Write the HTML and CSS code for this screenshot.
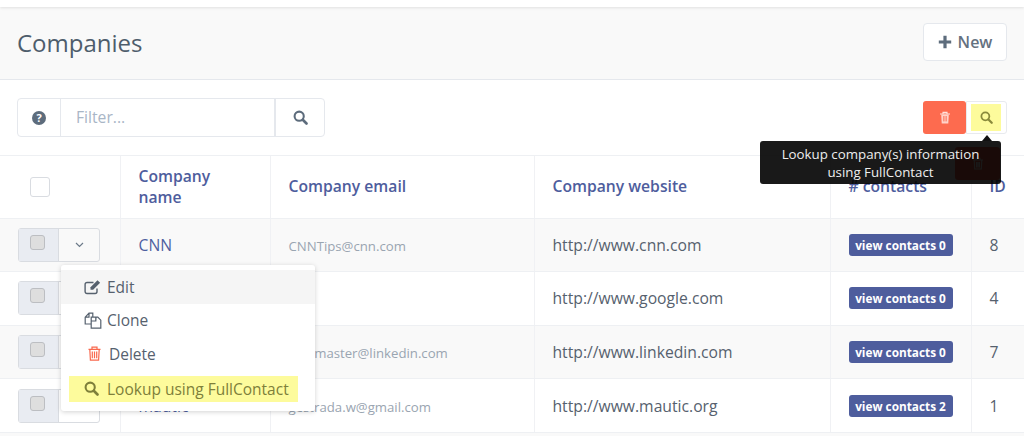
FILE: index.html
```html
<!DOCTYPE html>
<html lang="en">

<head>
    <meta charset="UTF-8">
    <meta name="viewport" content="width=device-width, initial-scale=1.0">
    <title>Companies</title>
    <link rel="stylesheet" href="styles.css">
</head>

<body>
    <div class="topbar"></div>

    <header class="page-head">
        <h1>Companies</h1>
        <button class="btn-new">
            <svg class="ico" width="14" height="14" viewBox="0 0 14 14"><path d="M5.4 0.8h3.2v4.6h4.6v3.2H8.6v4.6H5.4V8.6H0.8V5.4h4.6z" fill="#5d6c7c"/></svg>
            New
        </button>
    </header>

    <div class="toolbar">
        <div class="filter">
            <span class="addon addon-help"><span class="help-dot">?</span></span>
            <input class="filter-input" type="text" placeholder="Filter...">
            <span class="addon addon-search">
                <svg width="15" height="15" viewBox="0 0 16 16"><circle cx="6.6" cy="6.6" r="4.9" fill="none" stroke="#5d6c7c" stroke-width="2.2"/><path d="M10.4 10.4l4 4" stroke="#5d6c7c" stroke-width="2.8" stroke-linecap="round"/></svg>
            </span>
        </div>
        <div class="actions">
            <button class="btn-delete">
                <svg width="12" height="13" viewBox="0 0 12 13"><path d="M1 3h10M4 3V1.4h4V3" fill="none" stroke="#ffe3dc" stroke-width="1.1"/><path d="M2.200 3.400l.5 9h6.600l.5-9z" fill="#ffd2c8"/><path d="M4.600 5v5.400M6 5v5.400M7.400 5v5.400" stroke="#fd6b4f" stroke-width=".7"/></svg>
            </button>
            <span class="btn-lookup">
                <span class="lookup-mark">
                    <svg width="13" height="13" viewBox="0 0 16 16"><circle cx="6.6" cy="6.6" r="4.9" fill="none" stroke="#8a8a3c" stroke-width="2.2"/><path d="M10.4 10.4l4 4" stroke="#8a8a3c" stroke-width="2.8" stroke-linecap="round"/></svg>
                </span>
            </span>
        </div>
    </div>

    <table class="list">
        <colgroup>
            <col class="c-check">
            <col class="c-name">
            <col class="c-email">
            <col class="c-site">
            <col class="c-count">
            <col class="c-id">
        </colgroup>
        <thead>
            <tr>
                <th class="head-check"><span class="check-all"></span></th>
                <th>Company<br>name</th>
                <th>Company email</th>
                <th>Company website</th>
                <th># contacts</th>
                <th>ID</th>
            </tr>
        </thead>
        <tbody>
            <tr>
                <td class="cell-check"><span class="row-tools"><span class="tool-box"><i class="tick"></i></span><span class="tool-caret"><svg width="9" height="6" viewBox="0 0 9 6"><path d="M1 1l3.500 3.500L8 1" fill="none" stroke="#6c7a89" stroke-width="1.200"/></svg></span></span></td>
                <td><a class="name">CNN</a></td>
                <td class="email">CNNTips@cnn.com</td>
                <td class="site">http://www.cnn.com</td>
                <td><span class="badge">view contacts 0</span></td>
                <td class="num">8</td>
            </tr>
            <tr>
                <td class="cell-check"><span class="row-tools"><span class="tool-box"><i class="tick"></i></span><span class="tool-caret"></span></span></td>
                <td><a class="name">google</a></td>
                <td class="email"></td>
                <td class="site">http://www.google.com</td>
                <td><span class="badge">view contacts 0</span></td>
                <td class="num">4</td>
            </tr>
            <tr>
                <td class="cell-check"><span class="row-tools"><span class="tool-box"><i class="tick"></i></span><span class="tool-caret"></span></span></td>
                <td><a class="name">linkedin</a></td>
                <td class="email">webmaster@linkedin.com</td>
                <td class="site">http://www.linkedin.com</td>
                <td><span class="badge">view contacts 0</span></td>
                <td class="num">7</td>
            </tr>
            <tr>
                <td class="cell-check"><span class="row-tools"><span class="tool-box"><i class="tick"></i></span><span class="tool-caret"></span></span></td>
                <td><a class="name">mautic</a></td>
                <td class="email">gestrada.w@gmail.com</td>
                <td class="site">http://www.mautic.org</td>
                <td><span class="badge">view contacts 2</span></td>
                <td class="num">1</td>
            </tr>
        </tbody>
    </table>
    <div class="next-row"></div>

    <!--row menu-->
    <ul class="menu">
        <li class="menu-item is-active">
            <svg class="menu-ico" width="18" height="16" viewBox="0 0 18 16"><path d="M13 9.500V12.600a1.900 1.900 0 0 1-1.900 1.900H3a1.900 1.900 0 0 1-1.900-1.900V5.400A1.900 1.900 0 0 1 3 3.500h6.500" fill="none" stroke="#56616e" stroke-width="1.400"/><path d="M6.500 8.200l7-7 2.600 2.600-7 7H6.500z" fill="#56616e"/></svg>
            Edit
        </li>
        <li class="menu-item">
            <svg class="menu-ico" width="18" height="17" viewBox="0 0 18 17"><path d="M7 12H1.200V5.200L5 1.200h3.800V5M5 1.200V5.200H1.200" fill="none" stroke="#56616e" stroke-width="1.200"/><path d="M7.200 9V5.200h4.600V9zM12 5.200h1.800L16.800 8.200v8H7.200V9h4.600z" fill="none" stroke="#56616e" stroke-width="1.200"/></svg>
            Clone
        </li>
        <li class="menu-item item-delete">
            <svg class="menu-ico" width="13" height="15" viewBox="0 0 13 15"><path d="M.5 3.400h12M4 3.400V1.100h5v2.300M1.800 3.400l.6 10.800h8.200l.6-10.800M4.300 5.500v6.800M6.500 5.500v6.800M8.700 5.500v6.800" fill="none" stroke="#f9684d" stroke-width="1.200"/></svg>
            Delete
        </li>
        <li class="menu-item item-lookup">
            <svg class="menu-ico" width="15" height="15" viewBox="0 0 16 16"><circle cx="6.600" cy="6.600" r="4.900" fill="none" stroke="#7e7f3a" stroke-width="2.200"/><path d="M10.400 10.400l4 4" stroke="#7e7f3a" stroke-width="2.800" stroke-linecap="round"/></svg>
            Lookup using FullContact
        </li>
    </ul>

    <!--floating delete button that sits under the tooltip-->
    <span class="head-delete">
        <svg width="12" height="13" viewBox="0 0 12 13"><path d="M1 3h10M4 3V1.400h4V3M2.200 3l.5 9h6.600l.5-9M4.600 5v5.400M6 5v5.400M7.400 5v5.400" fill="none" stroke="#fff" stroke-width="1.100"/></svg>
    </span>

    <div class="tooltip">Lookup company(s) information<br>using FullContact</div>
</body>

</html>
```

FILE: styles.css
```css
html,
body {
    height: 100%;
}

body {
    margin: 0;
    position: relative;
    overflow: hidden;
    background: #fff;
    color: #56616e;
    font-family: "Open Sans", "Liberation Sans", sans-serif;
    font-size: 16px;
}

.topbar {
    height: 7px;
    background: #fff;
    box-shadow: 0 1px 3px rgba(0, 0, 0, 0.1);
    position: relative;
}

.page-head {
    height: 70px;
    background: #f9f9f9;
    border-bottom: 1px solid #e5e8ed;
    padding: 0 17px 2px;
    display: flex;
    align-items: center;
    justify-content: space-between;
}

.page-head h1 {
    margin: 0;
    font-size: 24px;
    font-weight: 400;
    color: #4e5d6c;
}

.btn-new {
    width: 84px;
    height: 38px;
    padding: 0;
    display: flex;
    align-items: center;
    justify-content: center;
    gap: 6px;
    background: #fff;
    border: 1px solid #e5e8ed;
    border-radius: 4px;
    color: #64717f;
    font: 600 16px "Open Sans", sans-serif;
}

.toolbar {
    height: 76px;
    padding: 0 17px;
    display: flex;
    align-items: center;
    justify-content: space-between;
    box-sizing: border-box;
    border-bottom: 1px solid #eef0f3;
}

.filter {
    display: flex;
    height: 39px;
    width: 308px;
    box-sizing: border-box;
    border: 1px solid #e5e8ed;
    border-radius: 4px;
}

.addon {
    display: flex;
    align-items: center;
    justify-content: center;
}

.addon-help {
    width: 42px;
    border-right: 1px solid #e5e8ed;
}

.help-dot {
    width: 14px;
    height: 14px;
    border-radius: 50%;
    background: #5d6c7c;
    color: #fff;
    font: 700 11px/14px "Open Sans", sans-serif;
    text-align: center;
}

.filter-input {
    width: 215px;
    box-sizing: border-box;
    border: 0;
    border-right: 2px solid #e5e8ed;
    padding: 0 15px 2px;
    outline: 0;
    background: transparent;
    font: 400 15.700px "Open Sans", sans-serif;
}

.filter-input::placeholder {
    color: #a9b6c6;
    opacity: 1;
}

.addon-search {
    flex: 1;
}

.actions {
    display: flex;
    margin-top: -1px;
}

.btn-delete {
    width: 43px;
    height: 33px;
    padding: 0;
    border: 0;
    border-radius: 3px;
    background: #fd6b4f;
    display: flex;
    align-items: center;
    justify-content: center;
}

.btn-lookup {
    width: 41px;
    height: 33px;
    box-sizing: border-box;
    padding-right: 1px;
    display: flex;
    align-items: center;
    justify-content: center;
    border: 1px solid #e8eaee;
    border-radius: 0 3px 3px 0;
}

.lookup-mark {
    width: 30px;
    height: 27px;
    display: flex;
    align-items: center;
    justify-content: center;
    background: #fdfb9c;
}

.list {
    width: 1024px;
    table-layout: fixed;
    border-collapse: collapse;
}

.c-check {
    width: 120px;
}

.c-name {
    width: 150px;
}

.c-email {
    width: 264px;
}

.c-site {
    width: 296px;
}

.c-count {
    width: 141px;
}

.list th {
    height: 62px;
    padding: 0 18px;
    box-sizing: border-box;
    text-align: left;
    font-size: 15.700px;
    line-height: 21px;
    font-weight: 600;
    color: #4e5d9d;
    border-right: 1px solid #f0f1f4;
    border-bottom: 1px solid #eef0f3;
}

.list th:last-child,
.list td:last-child {
    border-right: 0;
}

.check-all {
    display: block;
    width: 18px;
    height: 18px;
    margin-left: 12px;
    border: 1px solid #d9dce1;
    border-radius: 3px;
}

.list td {
    height: 53.600px;
    padding: 0 18px;
    box-sizing: border-box;
    border-right: 1px solid #f0f1f4;
    border-bottom: 1px solid #eef0f3;
}

.list tbody tr:nth-child(odd) {
    background: #f9f9f9;
}

.list .cell-check {
    padding: 0 0 0 18px;
}

.next-row {
    height: 3px;
    background: #f9f9f9;
}

.row-tools {
    display: flex;
    width: 82px;
    height: 34px;
    box-sizing: border-box;
    border: 1px solid #d9dce1;
    border-radius: 3px;
}

.tool-box {
    width: 40px;
    padding-right: 2px;
    box-sizing: border-box;
    display: flex;
    align-items: center;
    justify-content: center;
    background: #e9ecf2;
    border-right: 1px solid #d9dce1;
}

.tick {
    width: 13px;
    height: 13px;
    margin-top: -5px;
    border: 1px solid #bcbec2;
    border-radius: 3px;
    background: #dedede;
}

.tool-caret {
    flex: 1;
    display: flex;
    align-items: center;
    justify-content: center;
}

.name {
    color: #4e5f9f;
    font-size: 15.700px;
}

.email {
    padding-top: 3px !important;
    font-size: 13.200px;
    color: #9aa5b1;
}

.site {
    font-size: 15.700px;
    color: #56616e;
}

.badge {
    display: block;
    width: 104px;
    height: 22px;
    box-sizing: border-box;
    text-align: center;
    background: #4e5d9d;
    border-radius: 3px;
    color: #fff;
    font-size: 11.800px;
    font-weight: 700;
    line-height: 22px;
    white-space: nowrap;
}

.num {
    font-size: 15.700px;
    color: #56616e;
}

.menu {
    position: absolute;
    left: 61px;
    top: 265px;
    width: 254px;
    height: 146px;
    margin: 0;
    padding: 5px 0;
    box-sizing: border-box;
    list-style: none;
    background: #fff;
    border-radius: 3px;
    box-shadow: 0 1px 5px rgba(0, 0, 0, 0.18);
}

.menu-item {
    height: 33.600px;
    padding-left: 23px;
    display: flex;
    align-items: center;
    gap: 5px;
    font-size: 15.500px;
    color: #56616e;
}

.menu-ico {
    flex: none;
}

.is-active {
    background: #f5f5f5;
}

.item-delete {
    padding-left: 27px;
    gap: 8px;
}

.item-lookup {
    color: #7e7f3a;
    margin: 5px 17px 0 8px;
    height: 26px;
    padding-left: 15px;
    gap: 8px;
    background: #fdfb9c;
}

.head-delete {
    position: absolute;
    left: 955px;
    top: 147px;
    width: 45px;
    height: 33px;
    display: flex;
    align-items: center;
    justify-content: center;
    border-radius: 3px;
    background: #fd6b4f;
}

.tooltip {
    position: absolute;
    left: 760px;
    top: 141px;
    width: 241px;
    height: 43px;
    padding-top: 4px;
    box-sizing: border-box;
    text-align: center;
    background: rgba(0, 0, 0, 0.9);
    border-radius: 3px;
    color: #eee;
    font-size: 13.300px;
    line-height: 18px;
}

.tooltip::before {
    content: "";
    position: absolute;
    left: 222px;
    top: -6px;
    border: 5px solid transparent;
    border-top: 0;
    border-bottom: 6px solid #111;
}
```
